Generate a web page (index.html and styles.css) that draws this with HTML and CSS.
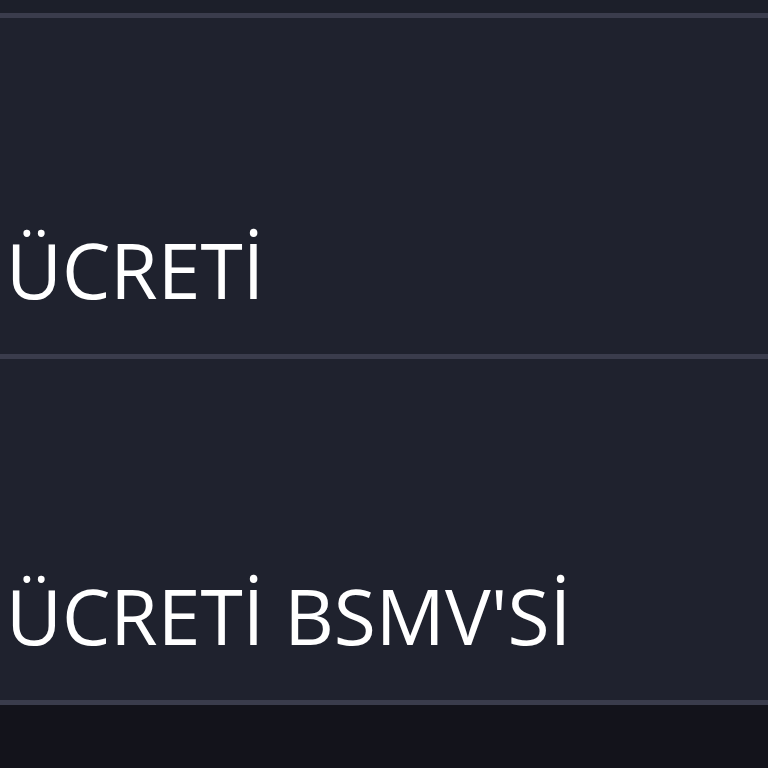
FILE: index.html
```html
<!DOCTYPE html>
<html lang="tr">
<head>
<meta charset="utf-8">
<link rel="stylesheet" href="styles.css">
</head>
<body>
<div class="table">
  <div class="row row-top"></div>
  <div class="row row-first"><span class="cell">ÜCRETİ</span></div>
  <div class="row row-second"><span class="cell">ÜCRETİ BSMV'Sİ</span></div>
</div>
</body>
</html>
```
FILE: styles.css
```css
html, body {
  margin: 0;
  padding: 0;
  background: #13131b;
}
.table {
  display: flex;
  flex-direction: column;
  width: 768px;
}
.row {
  display: flex;
  align-items: flex-end;
  background: #1f222e;
  border-bottom: 5px solid #3a3c4c;
  box-sizing: border-box;
  padding: 0 0 45px 6px;
}
.row-top {
  height: 18px;
  padding: 0;
  background: #1c1f2a;
}
.row-first {
  height: 341px;
}
.row-second {
  height: 346px;
}
.cell {
  display: block;
  font-family: "Open Sans", sans-serif;
  font-size: 76.8px;
  line-height: 1;
  color: #ffffff;
  white-space: nowrap;
}
```
